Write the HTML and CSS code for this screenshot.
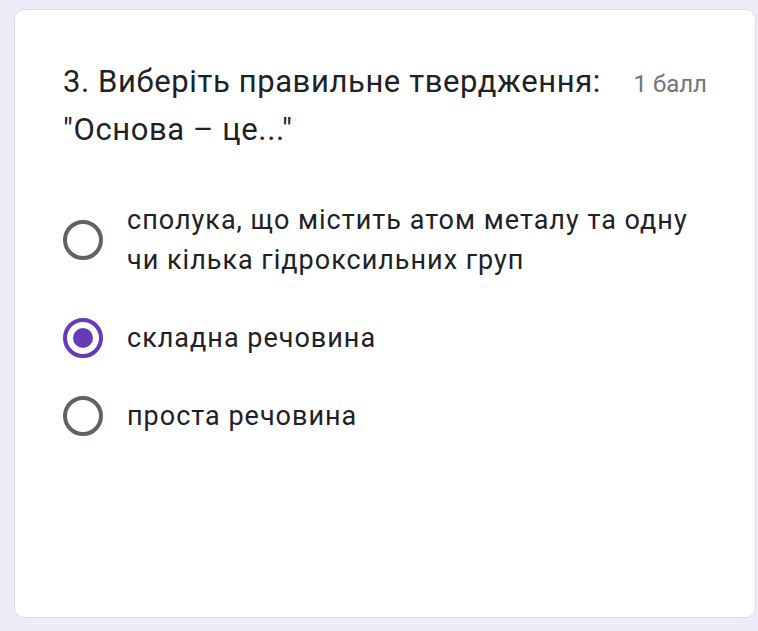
FILE: index.html
```html
<!DOCTYPE html>
<html lang="uk">
<head>
    <meta charset="UTF-8">
    <title>Питання 3</title>
    <link rel="stylesheet" href="styles.css">
</head>
<body>
    <div class="card">
        <div class="question-head">
            <div class="question-title">3. Виберіть правильне твердження: "Основа – це..."</div>
            <div class="points">1 балл</div>
        </div>

        <!-- Answer options -->
        <div class="options">
            <div class="option">
                <span class="radio"></span>
                <span class="option-text">сполука, що містить атом металу та одну чи кілька гідроксильних груп</span>
            </div>
            <div class="option">
                <span class="radio checked"></span>
                <span class="option-text">складна речовина</span>
            </div>
            <div class="option">
                <span class="radio"></span>
                <span class="option-text">проста речовина</span>
            </div>
        </div>
    </div>
</body>
</html>
```

FILE: styles.css
```css
body {
    margin: 0;
    background-color: #f0ebf8;
    font-family: Roboto, "Liberation Sans", sans-serif;
    color: #202124;
}

.card {
    box-sizing: border-box;
    margin: 9px 2px 13px 14px;
    height: 609px;
    padding: 48px 48px 0 48px;
    background-color: #ffffff;
    border: 1px solid #dadce0;
    border-radius: 10px;
}

.question-head {
    display: flex;
    align-items: baseline;
}

.question-title {
    flex: 1;
    font-size: 31px;
    line-height: 48px;
    letter-spacing: 0.6px;
}

.points {
    margin-left: 24px;
    font-size: 24px;
    color: #70757a;
    white-space: nowrap;
}

.options {
    margin-top: 46px;
    display: flex;
    flex-direction: column;
    gap: 38px;
}

.option {
    display: flex;
    align-items: center;
}

.radio {
    box-sizing: border-box;
    flex: none;
    width: 40px;
    height: 40px;
    border: 4px solid #5f6368;
    border-radius: 50%;
    display: flex;
    align-items: center;
    justify-content: center;
}

.radio.checked {
    border-color: #673ab7;
}

.radio.checked::after {
    content: "";
    width: 20px;
    height: 20px;
    border-radius: 50%;
    background-color: #673ab7;
}

.option-text {
    margin-left: 24px;
    font-size: 27px;
    line-height: 40px;
    letter-spacing: 1px;
}
```
